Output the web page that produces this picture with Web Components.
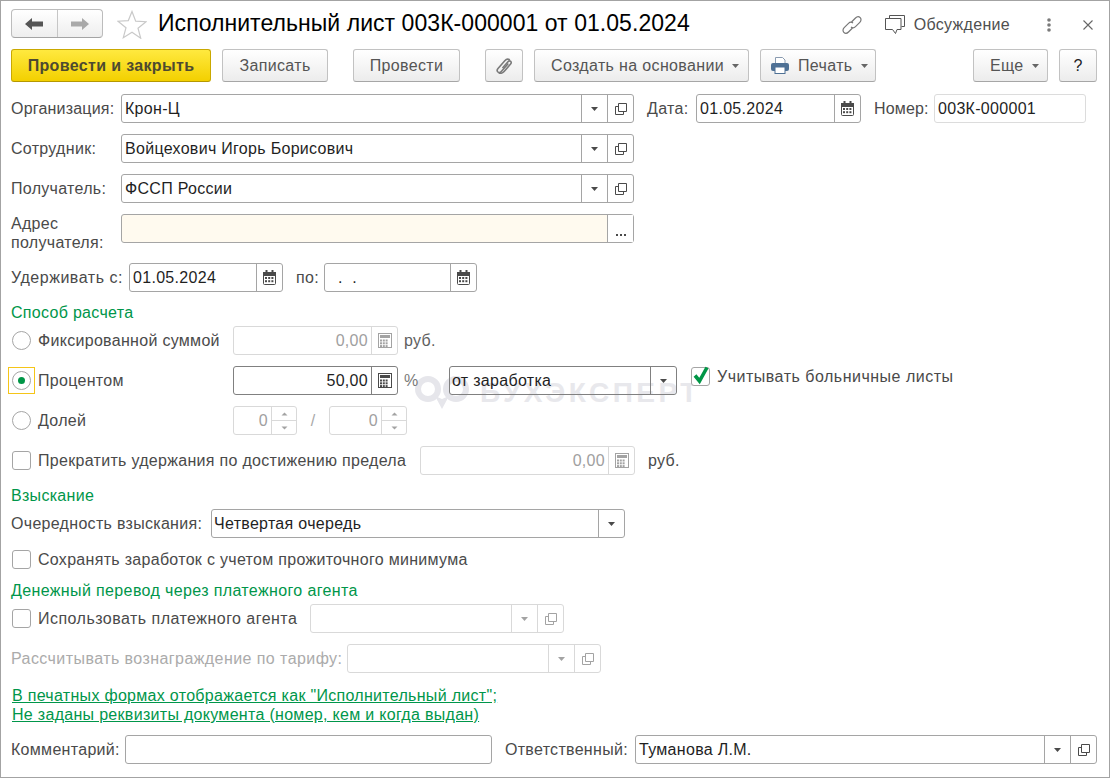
<!DOCTYPE html>
<html lang="ru">
<head>
<meta charset="utf-8">
<title>Исполнительный лист</title>
<style>
    html, body { margin: 0; padding: 0; background: #fff; }
    body { font: 16px "Liberation Sans", Arial, sans-serif; color: #4a4a4a; }
</style>
</head>
<body>
<app-window>
    <title-bar>Исполнительный лист 003К-000001 от 01.05.2024</title-bar>
    <tool-bar>
        <tool-btn w="200" kind="primary">Провести и закрыть</tool-btn>
        <tool-btn w="106" ml="11">Записать</tool-btn>
        <tool-btn w="107" ml="25">Провести</tool-btn>
        <tool-btn w="38" ml="25" icon="clip"></tool-btn>
        <tool-btn w="215" ml="11" pad="16" drop>Создать на основании</tool-btn>
        <tool-btn w="116" ml="11" pad="10" icon="print" drop>Печать</tool-btn>
        <tool-btn w="75" ml="97" pad="16" drop>Еще</tool-btn>
        <tool-btn w="38" ml="11" strong>?</tool-btn>
    </tool-bar>
    <form-body>
        <form-row style="margin-top:12px">
            <form-label w="110" style="letter-spacing:.2px">Организация:</form-label>
            <form-field w="513" btns="drop open">Крон-Ц</form-field>
            <form-label w="49" ml="13">Дата:</form-label>
            <form-field w="165" btns="date">01.05.2024</form-field>
            <form-label w="60" ml="13" style="letter-spacing:.15px">Номер:</form-label>
            <form-field w="152" kind="light">003К-000001</form-field>
        </form-row>
        <form-row>
            <form-label w="110">Сотрудник:</form-label>
            <form-field w="513" btns="drop open">Войцехович Игорь Борисович</form-field>
        </form-row>
        <form-row>
            <form-label w="110">Получатель:</form-label>
            <form-field w="513" btns="drop open">ФССП России</form-field>
        </form-row>
        <form-row>
            <form-label w="110" two>Адрес<br>получателя:</form-label>
            <form-field w="513" btns="more" fill="#fffaef"></form-field>
        </form-row>
        <form-row style="margin-top:20px">
            <form-label w="118" style="letter-spacing:.53px">Удерживать с:</form-label>
            <form-field w="154" btns="date">01.05.2024</form-field>
            <form-label w="28" ml="13">по:</form-label>
            <form-field w="153" btns="date" pad="13">.&nbsp;&nbsp;.</form-field>
        </form-row>

        <form-head style="margin-top:11px">Способ расчета</form-head>
        <form-row style="margin-top:5px">
            <form-choice w="222" type="radio">Фиксированной суммой</form-choice>
            <form-field w="165" kind="off" btns="calc" align="right">0,00</form-field>
            <form-label w="40" ml="6" tone="#5f5f5f">руб.</form-label>
        </form-row>
        <form-row>
            <form-choice w="222" type="radio" checked focused>Процентом</form-choice>
            <form-field w="165" kind="dark" btns="calc" align="right">50,00</form-field>
            <form-label w="45" ml="6" tone="#7a7a7a">%</form-label>
            <form-field w="228" kind="dark" btns="drop" pad="2">от заработка</form-field>
            <form-choice w="262" ml="14" up type="check" checked style="letter-spacing:.5px">Учитывать больничные листы</form-choice>
        </form-row>
        <form-row>
            <form-choice w="222" type="radio">Долей</form-choice>
            <form-field w="64" kind="off" btns="spin" align="right">0</form-field>
            <form-label w="32" tone="#a8a8a8" center>/</form-label>
            <form-field w="78" kind="off" btns="spin" align="right">0</form-field>
        </form-row>
        <form-row>
            <form-choice w="409" type="check">Прекратить удержания по достижению предела</form-choice>
            <form-field w="215" kind="off" btns="calc" align="right">0,00</form-field>
            <form-label w="40" ml="13">руб.</form-label>
        </form-row>

        <form-head style="margin-top:11px">Взыскание</form-head>
        <form-row style="margin-top:5px">
            <form-label w="200">Очередность взыскания:</form-label>
            <form-field w="414" btns="drop" pad="2">Четвертая очередь</form-field>
        </form-row>
        <form-row style="margin-top:7px">
            <form-choice w="600" type="check">Сохранять заработок с учетом прожиточного минимума</form-choice>
        </form-row>
        <form-head style="margin-top:7px;letter-spacing:.37px">Денежный перевод через платежного агента</form-head>
        <form-row style="margin-top:5px">
            <form-choice w="299" type="check" style="letter-spacing:.47px">Использовать платежного агента</form-choice>
            <form-field w="254" kind="off" btns="drop open"></form-field>
        </form-row>
        <form-row>
            <form-label w="336" tone="#ababab" style="letter-spacing:.43px">Рассчитывать вознаграждение по тарифу:</form-label>
            <form-field w="254" kind="off" btns="drop open"></form-field>
        </form-row>
        <form-link style="margin-top:13px">В печатных формах отображается как "Исполнительный лист";</form-link>
        <form-link>Не заданы реквизиты документа (номер, кем и когда выдан)</form-link>
        <form-row>
            <form-label w="114">Комментарий:</form-label>
            <form-field w="367"></form-field>
            <form-label w="130" ml="13">Ответственный:</form-label>
            <form-field w="462" btns="drop open">Туманова Л.М.</form-field>
        </form-row>
    </form-body>
</app-window>

<script>
const svg = (w, h, body) => `<svg width="${w}" height="${h}" viewBox="0 0 ${w} ${h}" fill="none" aria-hidden="true">${body}</svg>`;

function gridCells(x, y, cols, rows, step, color) {
    let out = '';
    for (let r = 0; r < rows; r++) {
        for (let c = 0; c < cols; c++) {
            out += `<rect x="${x + c * step}" y="${y + r * step}" width="2" height="2" fill="${color}"/>`;
        }
    }
    return out;
}

const icons = {
    drop: c => svg(7, 4, `<path d="M0 0h7L3.500 4z" fill="${c}"/>`),
    open: c => svg(12, 12, `<path d="M3.500 0.500h8v8h-8z" stroke="${c}"/><path d="M3.500 3.500h-3v8h8v-3" stroke="${c}"/>`),
    more: c => svg(10, 2, `<rect x="0" y="0" width="2" height="2" fill="${c}"/><rect x="4" y="0" width="2" height="2" fill="${c}"/><rect x="8" y="0" width="2" height="2" fill="${c}"/>`),
    date: c => svg(13, 15, `<rect x="0.500" y="2.500" width="12" height="12" rx="1" stroke="${c}"/><rect x="0" y="2" width="13" height="4" fill="${c}"/><rect x="2.500" y="0" width="2" height="4" fill="${c}"/><rect x="8.500" y="0" width="2" height="4" fill="${c}"/>${gridCells(2, 7, 3, 2, 3.2, c)}`),
    calc: c => svg(14, 15, `<rect x="0.500" y="0.500" width="13" height="14" stroke="${c}"/><rect x="2" y="2" width="10" height="3" fill="${c}"/>${gridCells(2, 6.500, 3, 3, 2.800, c)}`),
    spin: c => svg(7, 27, `<path d="M0.500 8.500L3.500 5.500L6.500 8.500z" fill="${c}"/><path d="M0.500 19.500L3.500 22.500L6.500 19.500z" fill="${c}"/>`)
};

const chainLoop = `M9.500 7L13.500 3C15 1.500 17 1.500 18.200 2.700C19.400 3.900 19.200 6 17.800 7.400L13.500 11.700C12 13.200 10.200 13 9 12`;

class AppWindow extends HTMLElement {
    connectedCallback() {
        this.attachShadow({ mode: 'open' });
        this.shadowRoot.innerHTML = `
            <style>
                :host {
                    display: block;
                    position: relative;
                    box-sizing: border-box;
                    width: 1110px;
                    height: 778px;
                    border: 1px solid #a3a3a3;
                    overflow: hidden;
                    background: #fff;
                }
                .content { position: relative; z-index: 1; }
                .mark {
                    position: absolute;
                    left: 414px;
                    top: 375px;
                    display: flex;
                    align-items: flex-start;
                    gap: 11px;
                    color: #e8e8ec;
                    font: bold 28px/28px "Liberation Sans", Arial, sans-serif;
                    letter-spacing: 3.5px;
                }
                .mark span { margin-top: 3px; white-space: nowrap; }
            </style>
            <div class="mark">
                ${svg(54, 33, `<circle cx="13" cy="13" r="10" stroke="#e6e6eb" stroke-width="6"/><circle cx="41" cy="13" r="10" stroke="#e6e6eb" stroke-width="6"/><path d="M20 20l7 13 7-13-7 3z" fill="#e6e6eb"/>`)}
                <span>БУХЭКСПЕРТ</span>
            </div>
            <div class="content"><slot></slot></div>
        `;
    }
}

class TitleBar extends HTMLElement {
    connectedCallback() {
        this.attachShadow({ mode: 'open' });
        this.shadowRoot.innerHTML = `
            <style>
                :host {
                    display: flex;
                    align-items: center;
                    height: 47px;
                    padding: 0 16px 0 10px;
                    box-sizing: border-box;
                }
                .nav {
                    display: flex;
                    width: 92px;
                    height: 29px;
                    margin-top: -2px;
                    box-sizing: border-box;
                    border: 1px solid #bcbcbc;
                    border-bottom-color: #a4a4a4;
                    border-radius: 4px;
                    background: linear-gradient(#fff, #eee);
                }
                .nav div { flex: 1; display: flex; align-items: center; justify-content: center; }
                .nav div + div { border-left: 1px solid #c6c6c6; }
                .star { display: flex; margin: -1px 11px 0 14px; }
                h1 {
                    margin: -2px 0 0;
                    flex: 1;
                    font: 23px "Liberation Sans", Arial, sans-serif;
                    letter-spacing: 0.05px;
                    color: #000;
                    white-space: nowrap;
                }
                .link { display: flex; margin-right: 23px; }
                .talk { display: flex; margin-right: 9px; }
                .talk-text { color: #4f4f4f; margin-right: 37px; font-size: 16px; letter-spacing: 0.3px; white-space: nowrap; }
                .dots { display: flex; margin-right: 32px; }
                .close { display: flex; }
            </style>
            <div class="nav">
                <div>${svg(18, 14, `<path d="M0 7L7 1v3.500h11v5H7V13z" fill="#555"/>`)}</div>
                <div>${svg(18, 14, `<path d="M18 7L11 1v3.500H0v5h11V13z" fill="#a9a9a9"/>`)}</div>
            </div>
            <div class="star">${svg(30, 29, `<path d="M15 1.500l3.700 9.600 10.300.6-8 6.500 2.700 10L15 22.200 6.300 27.700l2.700-10-8-6.500 10.300-.6z" stroke="#c9c9c9" stroke-width="1.200" fill="#fff"/>`)}</div>
            <h1><slot></slot></h1>
            <div class="link">${svg(20, 20, `<path d="${chainLoop}" stroke="#777" stroke-width="1.200"/><path d="${chainLoop}" stroke="#777" stroke-width="1.200" transform="rotate(180 10 10)"/>`)}</div>
            <div class="talk">${svg(20, 20, `<path d="M4.500 3.500V0.500h15v11h-3" stroke="#555"/><path d="M0.500 3.500h15.500v11H12l-1.500 4-3-4h-7z" stroke="#555" fill="#fff"/>`)}</div>
            <div class="talk-text">Обсуждение</div>
            <div class="dots">${svg(4, 14, `<circle cx="2" cy="2" r="1.800" fill="#7a7a7a"/><circle cx="2" cy="7" r="1.800" fill="#7a7a7a"/><circle cx="2" cy="12" r="1.800" fill="#7a7a7a"/>`)}</div>
            <div class="close">${svg(10, 10, `<path d="M0.500 0.500l9 9M9.500 0.500l-9 9" stroke="#666" stroke-width="1.100"/>`)}</div>
        `;
    }
}

class ToolBar extends HTMLElement {
    connectedCallback() {
        this.attachShadow({ mode: 'open' });
        this.shadowRoot.innerHTML = `
            <style>
                :host { display: flex; height: 33px; padding-left: 10px; margin-top: 1px; }
            </style>
            <slot></slot>
        `;
    }
}

class ToolBtn extends HTMLElement {
    connectedCallback() {
        const primary = this.getAttribute('kind') === 'primary';
        const pad = this.getAttribute('pad');
        const iconName = this.getAttribute('icon');
        const extra = {
            clip: svg(16, 18, `<path d="M13.500 5.500L6.500 13.500c-1 1.200-2.500 1.300-3.400.5-.9-.8-.9-2.300.1-3.500l6.800-7.800c1.500-1.700 3.600-1.900 5-.7" stroke="#7a7a7a" stroke-width="1.600" transform="translate(-1.200 1)"/><path d="M5 9.500l5.500-6.300c.8-.9 2-1 2.700-.4.700.6.700 1.800-.1 2.700l-6.500 7.500c-1.800 2-4 2.300-5.300 1.100" stroke="#7a7a7a" stroke-width="1.600" transform="translate(1.500 1.500)"/>`),
            print: svg(18, 17, `<path d="M4.500 7V0.500h7l2.500 2.500V7" stroke="#8a9bb0" fill="#fff"/><rect x="0" y="6" width="18" height="8" rx="2" fill="#4f7195"/><rect x="4" y="10" width="10" height="6.500" fill="#fff" stroke="#4f7195"/>`)
        }[iconName] || '';
        this.attachShadow({ mode: 'open' });
        this.shadowRoot.innerHTML = `
            <style>
                :host {
                    display: flex;
                    align-items: center;
                    justify-content: ${pad ? 'flex-start' : 'center'};
                    box-sizing: border-box;
                    width: ${this.getAttribute('w')}px;
                    height: 33px;
                    margin-left: ${this.getAttribute('ml') || 0}px;
                    padding-left: ${pad || 0}px;
                    border: 1px solid ${primary ? '#c9a800' : '#c2c2c2'};
                    border-bottom-color: ${primary ? '#b59800' : '#a6a6a6'};
                    border-radius: 3px;
                    background: ${primary ? 'linear-gradient(#ffe93f, #f3d000)' : 'linear-gradient(#fff, #ececec)'};
                    color: ${primary ? '#4d4a30' : this.hasAttribute('strong') ? '#222' : '#555'};
                    font: ${primary ? 'bold' : 'normal'} 16px "Liberation Sans", Arial, sans-serif;
                    letter-spacing: 0.35px;
                    white-space: nowrap;
                }
                .icon { display: flex; margin-right: ${this.textContent.trim() ? 9 : 0}px; }
                .tri { display: flex; margin-left: 8px; }
            </style>
            ${extra ? `<span class="icon">${extra}</span>` : ''}
            <slot></slot>
            ${this.hasAttribute('drop') ? `<span class="tri">${svg(7, 4, `<path d="M0 0h7L3.500 4z" fill="#666"/>`)}</span>` : ''}
        `;
    }
}

class FormBody extends HTMLElement {
    connectedCallback() {
        this.attachShadow({ mode: 'open' });
        this.shadowRoot.innerHTML = `
            <style>
                :host { display: flex; flex-direction: column; padding-left: 10px; letter-spacing: 0.3px; }
            </style>
            <slot></slot>
        `;
    }
}

class FormRow extends HTMLElement {
    connectedCallback() {
        this.attachShadow({ mode: 'open' });
        this.shadowRoot.innerHTML = `
            <style>
                :host { display: flex; align-items: flex-start; height: 29px; margin-top: 11px; }
            </style>
            <slot></slot>
        `;
    }
}

class FormLabel extends HTMLElement {
    connectedCallback() {
        const two = this.hasAttribute('two');
        this.attachShadow({ mode: 'open' });
        this.shadowRoot.innerHTML = `
            <style>
                :host {
                    display: block;
                    flex: none;
                    box-sizing: border-box;
                    width: ${this.getAttribute('w')}px;
                    margin-left: ${this.getAttribute('ml') || 0}px;
                    color: ${this.getAttribute('tone') || '#4a4a4a'};
                    font: 16px/${two ? '19px' : '29px'} "Liberation Sans", Arial, sans-serif;
                    white-space: nowrap;
                    text-align: ${this.hasAttribute('center') ? 'center' : 'left'};
                }
            </style>
            <slot></slot>
        `;
    }
}

class FormField extends HTMLElement {
    connectedCallback() {
        const kind = this.getAttribute('kind') || 'normal';
        const borders = { normal: '#a5a5a5', dark: '#808080', light: '#dcdcdc', off: '#d9d9d9' };
        const iconTone = kind === 'off' ? '#a3a3a3' : '#4a4a4a';
        const btns = (this.getAttribute('btns') || '').split(' ').filter(Boolean);
        this.attachShadow({ mode: 'open' });
        this.shadowRoot.innerHTML = `
            <style>
                :host {
                    display: flex;
                    flex: none;
                    box-sizing: border-box;
                    width: ${this.getAttribute('w')}px;
                    height: 29px;
                    border: 1px solid ${borders[kind]};
                    border-radius: 3px;
                    background: ${this.getAttribute('fill') || 'transparent'};
                    color: ${kind === 'off' ? '#a0a0a0' : '#1f1f1f'};
                    font: 16px/27px "Liberation Sans", Arial, sans-serif;
                }
                .val {
                    flex: 1;
                    min-width: 0;
                    padding: 0 3px 0 ${this.getAttribute('pad') || 3}px;
                    text-align: ${this.getAttribute('align') || 'left'};
                    white-space: nowrap;
                    overflow: hidden;
                }
                .btn {
                    flex: none;
                    display: flex;
                    align-items: center;
                    justify-content: center;
                    box-sizing: border-box;
                    width: 26px;
                    border-left: 1px solid ${borders[kind]};
                }
                .btn.spin { width: 25px; background: linear-gradient(transparent 13px, ${borders[kind]} 13px, ${borders[kind]} 14px, transparent 14px); }
                .btn.more { align-items: flex-end; padding-bottom: 6px; background: #fff; }
            </style>
            <div class="val"><slot></slot></div>
            ${btns.map(b => `<div class="btn ${b}">${icons[b](iconTone)}</div>`).join('')}
        `;
    }
}

class FormChoice extends HTMLElement {
    connectedCallback() {
        const radio = this.getAttribute('type') === 'radio';
        const checked = this.hasAttribute('checked');
        let mark = '';
        if (checked) {
            mark = radio
                ? `<i class="dot"></i>`
                : svg(19, 20, `<path d="M4 9.500l4.500 5.500L16 1.500" stroke="#009646" stroke-width="3.600"/>`);
        }
        this.attachShadow({ mode: 'open' });
        this.shadowRoot.innerHTML = `
            <style>
                :host {
                    display: flex;
                    flex: none;
                    align-items: center;
                    box-sizing: border-box;
                    width: ${this.getAttribute('w')}px;
                    height: ${this.hasAttribute('up') ? 21 : 29}px;
                    margin-left: ${this.getAttribute('ml') || 0}px;
                    padding-left: ${this.hasAttribute('ml') ? 0 : 1}px;
                    color: #4a4a4a;
                    font: 16px "Liberation Sans", Arial, sans-serif;
                    white-space: nowrap;
                }
                .box {
                    position: relative;
                    flex: none;
                    display: flex;
                    align-items: center;
                    justify-content: center;
                    box-sizing: border-box;
                    width: 19px;
                    height: 19px;
                    margin-right: 7px;
                    border: 1px solid #a5a5a5;
                    border-radius: ${radio ? '50%' : '3px'};
                    background: #fff;
                }
                .box svg { position: absolute; left: -1px; top: -2px; }
                .dot { width: 7px; height: 7px; border-radius: 50%; background: #009646; }
                .focus {
                    position: absolute;
                    left: -5px;
                    top: -5px;
                    width: 25px;
                    height: 25px;
                    border: 1px solid #f5c518;
                }
            </style>
            <span class="box">${mark}${this.hasAttribute('focused') ? '<span class="focus"></span>' : ''}</span>
            <slot></slot>
        `;
    }
}

class FormHead extends HTMLElement {
    connectedCallback() {
        this.attachShadow({ mode: 'open' });
        this.shadowRoot.innerHTML = `
            <style>
                :host { display: block; height: 18px; color: #00964a; font: 16px/20px "Liberation Sans", Arial, sans-serif; }
            </style>
            <slot></slot>
        `;
    }
}

class FormLink extends HTMLElement {
    connectedCallback() {
        this.attachShadow({ mode: 'open' });
        this.shadowRoot.innerHTML = `
            <style>
                :host { display: block; height: 19px; padding-left: 1px; color: #00964a; font: 16px/19px "Liberation Sans", Arial, sans-serif; text-decoration: underline; }
            </style>
            <slot></slot>
        `;
    }
}

customElements.define('app-window', AppWindow);
customElements.define('title-bar', TitleBar);
customElements.define('tool-bar', ToolBar);
customElements.define('tool-btn', ToolBtn);
customElements.define('form-body', FormBody);
customElements.define('form-row', FormRow);
customElements.define('form-label', FormLabel);
customElements.define('form-field', FormField);
customElements.define('form-choice', FormChoice);
customElements.define('form-head', FormHead);
customElements.define('form-link', FormLink);
</script>
</body>
</html>
